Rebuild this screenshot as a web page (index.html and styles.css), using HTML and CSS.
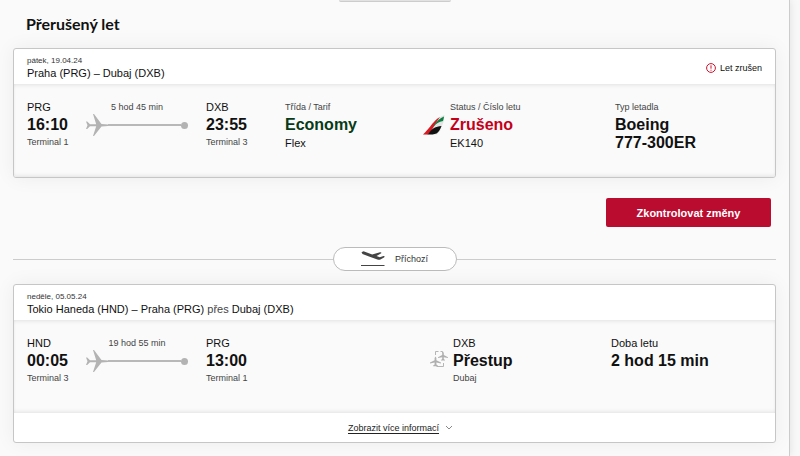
FILE: index.html
```html
<!doctype html>
<html lang="cs">
  <head>
    <meta charset="UTF-8" />
    <meta name="viewport" content="width=device-width, initial-scale=1.0" />
    <title>Přerušený let</title>
    <link rel="stylesheet" href="styles.css">
  </head>
  <body>
    <!-- Shapes used by both flight cards -->
    <svg class="sprite" aria-hidden="true">
      <symbol id="plane" viewBox="0 0 22 24">
        <path d="M0 8.500h1.200l2.800 2.800h6.200L7 1h1l7.500 10 3.500.3 3 .2v1.500l-3 .2-3.500.3L8 23H7l3.200-9.800H4L1.200 16H0l1.500-3.700z" />
      </symbol>
      <symbol id="chevron" viewBox="0 0 8 6">
        <path d="M1 1l3 3 3-3" fill="none" stroke="#888" />
      </symbol>
    </svg>

    <main class="panel">
      <div class="panel-tab"></div>
      <h1 class="page-title">Přerušený let</h1>

      <section class="card">
        <header class="card-header">
          <div>
            <p class="card-date">pátek, 19.04.24</p>
            <h2 class="card-route">Praha (PRG) – Dubaj (DXB)</h2>
          </div>
          <p class="alert">
            <svg class="alert-icon" viewBox="0 0 10 10" aria-hidden="true">
              <circle cx="5" cy="5" r="4.400" fill="none" stroke="#d0112b" />
              <path d="M5 2.300v3.400M5 6.700v1" stroke="#d0112b" />
            </svg>
            Let zrušen
          </p>
        </header>
        <div class="card-body">
          <div class="journey">
            <div class="cell">
              <span class="code">PRG</span>
              <strong class="value">16:10</strong>
              <span class="note">Terminal 1</span>
            </div>
            <div class="track">
              <span class="duration">5 hod 45 min</span>
              <div class="track-line">
                <svg class="track-plane" aria-hidden="true"><use href="#plane" /></svg>
                <span class="track-rule"></span>
                <span class="track-dot"></span>
              </div>
            </div>
            <div class="cell">
              <span class="code">DXB</span>
              <strong class="value">23:55</strong>
              <span class="note">Terminal 3</span>
            </div>
          </div>
          <div class="cell">
            <span class="label">Třída / Tarif</span>
            <strong class="value value-economy">Economy</strong>
            <span class="detail">Flex</span>
          </div>
          <div class="with-icon">
            <svg class="tail-icon" viewBox="0 0 22 22" aria-hidden="true">
              <path d="M0 20.500L17 3l4.500-2-1 7-3.500 9-3 3.500z" fill="#e3e3e3" />
              <path d="M0 20.500C6 15 9 9 14.500 4.500L17 3C13 8 10.500 15 5 20.500z" fill="#d71921" />
              <path d="M11 11c3-4 6-7 10-8.500-.2 2-.6 3.200-1 4.500-4 .8-7 2.800-10 6z" fill="#0b8041" />
              <path d="M5.500 19.500c3.500-5 7-7 13-7.500-1 3-3 6.500-5 7.500-2.500 1-5 1-9 1z" fill="#111" />
            </svg>
            <div class="cell">
              <span class="label">Status / Číslo letu</span>
              <strong class="value value-cancelled">Zrušeno</strong>
              <span class="detail">EK140</span>
            </div>
          </div>
          <div class="cell">
            <span class="label">Typ letadla</span>
            <strong class="value">Boeing<br>777-300ER</strong>
          </div>
        </div>
      </section>

      <div class="actions">
        <button type="button" class="btn-primary">Zkontrolovat změny</button>
      </div>

      <div class="divider">
        <div class="divider-pill">
          <svg class="landing-icon" viewBox="0 0 24 16" aria-hidden="true">
            <path d="M.5 1.200l2-.9 8.700 3.300L19 1.200c1.200-.3 2 .7.800 1.400L15.500 5l3.300 1.300L22.500 5c1.300-.2 1.500.8.500 1.500l-3.600 2c-1 .4-2 .2-3 0L8 5.500 1.500 3z" fill="#444" />
            <path d="M0 14.500h23.500" stroke="#444" />
          </svg>
          Příchozí
        </div>
      </div>

      <section class="card">
        <header class="card-header">
          <div>
            <p class="card-date">neděle, 05.05.24</p>
            <h2 class="card-route">Tokio Haneda (HND) – Praha (PRG) <span class="via">přes</span> Dubaj (DXB)</h2>
          </div>
        </header>
        <div class="card-body card-body-transfer">
          <div class="journey">
            <div class="cell">
              <span class="code">HND</span>
              <strong class="value">00:05</strong>
              <span class="note">Terminal 3</span>
            </div>
            <div class="track">
              <span class="duration">19 hod 55 min</span>
              <div class="track-line">
                <svg class="track-plane" aria-hidden="true"><use href="#plane" /></svg>
                <span class="track-rule"></span>
                <span class="track-dot"></span>
              </div>
            </div>
            <div class="cell">
              <span class="code">PRG</span>
              <strong class="value">13:00</strong>
              <span class="note">Terminal 1</span>
            </div>
          </div>
          <div class="with-icon">
            <svg class="transfer-icon" viewBox="0 0 18 18" aria-hidden="true">
              <path d="M5.500 5V1.500h3M10.500 1.500h2V3M6.500 16.500h7V13" fill="none" stroke="#b5b5b5" />
              <path d="M5.500 6.500l.9 1.500v2.200L11 12.500v1l-4.600-1v2l1.400 1v.8H3.200v-.8l1.400-1v-2L0 13.500v-1l4.600-2.300V8zM13 1.500l.8 1.500v2L18 7.200v.9l-4.200-.9V9l1.200.9v.7h-4v-.7l1.200-.9V7.200L8 8.100v-.9L12.200 5V3z" fill="#b0b0b0" />
            </svg>
            <div class="cell">
              <span class="code">DXB</span>
              <strong class="value">Přestup</strong>
              <span class="note">Dubaj</span>
            </div>
          </div>
          <div class="cell">
            <span class="code">Doba letu</span>
            <strong class="value">2 hod 15 min</strong>
          </div>
        </div>
        <footer class="card-footer">
          <a class="more-link" href="#">Zobrazit více informací</a>
          <svg class="chevron" aria-hidden="true"><use href="#chevron" /></svg>
        </footer>
      </section>
    </main>
  </body>
</html>
```

FILE: styles.css
```css
* {
  box-sizing: border-box;
}

body {
  margin: 0;
  padding-right: 10px;
  background: #f8f8f8;
  color: #111;
  font-family: "Liberation Sans", Arial, sans-serif;
  font-size: 9px;
  line-height: 12px;
}

h1,
h2,
p {
  margin: 0;
}

.sprite {
  display: none;
}

.panel {
  min-height: 100vh;
  padding: 0 13px 13px;
  border-right: 1px solid #ccc;
  background: #fafafa;
  box-shadow: 0 0 8px rgba(0, 0, 0, 0.1);
}

.panel-tab {
  width: 112px;
  height: 2px;
  margin: 0 auto;
  border-bottom: 1px solid #ccc;
  border-radius: 0 0 6px 6px;
  background: #e2e2e2;
}

.page-title {
  padding: 12px 13px 14px;
  font-family: Lato, sans-serif;
  font-size: 16px;
  font-weight: 700;
  line-height: 20px;
}

.card {
  overflow: hidden;
  border: 1px solid #c6c6c6;
  border-radius: 3px;
  background: #fff;
  box-shadow: 0 0 20px rgba(0, 0, 0, 0.06);
}

.card-header {
  display: flex;
  align-items: center;
  justify-content: space-between;
  padding: 6px 13px 4px;
}

.card-date {
  color: #333;
  font-size: 8px;
}

.card-route {
  font-size: 11px;
  font-weight: normal;
  line-height: 13px;
}

.via {
  color: #444;
}

.alert {
  display: flex;
  align-items: center;
  gap: 4px;
}

.alert-icon {
  width: 10px;
  height: 10px;
}

.card-body {
  display: grid;
  grid-template-columns: 258fr 138fr 192fr 147fr;
  min-height: 93px;
  padding: 17px 13px;
  background: #fafafa;
  box-shadow: inset 0 3px 4px -2px rgba(0, 0, 0, 0.1), inset 0 -3px 4px -2px rgba(0, 0, 0, 0.1);
}

.card-body-transfer {
  grid-template-columns: 403fr 181fr 151fr;
}

.journey {
  display: grid;
  grid-template-columns: 59px 102px auto;
  justify-content: start;
}

.journey .cell:last-child {
  padding-left: 18px;
}

.cell {
  display: flex;
  flex-direction: column;
}

.code,
.label {
  line-height: 13px;
}

.code,
.detail {
  font-size: 11px;
}

.value {
  margin: 2px 0;
  font-size: 16px;
  line-height: 18px;
}

.value-economy {
  color: #073b17;
}

.value-cancelled {
  color: #c4001a;
}

.note,
.label,
.duration {
  color: #444;
}

.detail {
  line-height: 14px;
}

.track {
  text-align: center;
}

.track-line {
  display: flex;
  align-items: center;
  height: 24px;
}

.track-plane {
  width: 22px;
  height: 24px;
  fill: #b3b3b3;
}

.track-rule {
  flex: 1;
  height: 2px;
  background: #b8b8b8;
}

.track-dot {
  width: 7px;
  height: 7px;
  border-radius: 50%;
  background: #b3b3b3;
}

.with-icon {
  display: flex;
  align-items: flex-start;
  gap: 5px;
}

.tail-icon {
  width: 22px;
  height: 22px;
  margin-top: 13px;
}

.transfer-icon {
  width: 18px;
  height: 18px;
  margin-top: 13px;
}

.actions {
  display: flex;
  justify-content: flex-end;
  padding: 20px 5px;
}

.btn-primary {
  width: 165px;
  height: 29px;
  border: 0;
  border-radius: 2px;
  background: #ba0c2f;
  color: #fff;
  font: bold 11px "Liberation Sans", Arial, sans-serif;
  cursor: pointer;
}

.divider {
  display: flex;
  align-items: center;
  margin-bottom: 13px;
}

.divider::before,
.divider::after {
  content: "";
  flex: 1;
  height: 1px;
  background: #ccc;
}

.divider-pill {
  display: flex;
  align-items: center;
  justify-content: center;
  gap: 10px;
  width: 124px;
  height: 24px;
  border: 1px solid #bbb;
  border-radius: 12px;
  background: #fff;
  color: #333;
}

.landing-icon {
  width: 24px;
  height: 16px;
}

.card-footer {
  display: flex;
  align-items: center;
  justify-content: center;
  gap: 6px;
  height: 29px;
  padding-left: 12px;
}

.more-link {
  color: #222;
  text-underline-offset: 2px;
}

.chevron {
  width: 8px;
  height: 6px;
}
```
